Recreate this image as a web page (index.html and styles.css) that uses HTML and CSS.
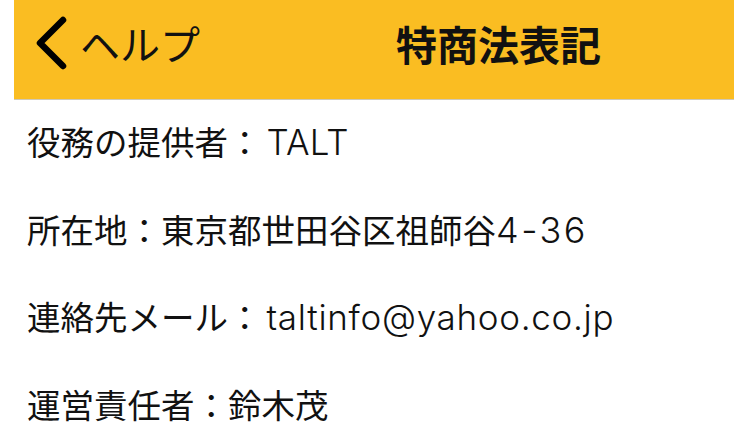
FILE: index.html
```html
<!DOCTYPE html>
<html lang="ja">
<head>
<meta charset="utf-8">
<link rel="stylesheet" href="styles.css">
</head>
<body>
<div class="page">
  <header class="navbar">
    <div class="nav-row">
      <svg class="chev" width="40" height="60" viewBox="0 0 40 60" aria-hidden="true">
        <polyline points="33,7 10,30 33,53" fill="none" stroke="#000" stroke-width="6.5" stroke-linecap="round" stroke-linejoin="round"/>
      </svg>
      <span class="back">ヘルプ</span>
      <span class="title">特商法表記</span>
    </div>
  </header>
  <ul class="info">
    <li>役務の提供者：<span class="lat after-colon">TALT</span></li>
    <li>所在地：東京都世田谷区祖師谷<span class="lat num">4-36</span></li>
    <li>連絡先メール：<span class="lat after-colon mail">taltinfo@yahoo.co.jp</span></li>
    <li>運営責任者：鈴木茂</li>
  </ul>
</div>
</body>
</html>
```
FILE: styles.css
```css
html, body {
  margin: 0;
  padding: 0;
  background: #fff;
}
body {
  font-family: "Noto Sans CJK JP", sans-serif;
  color: #111;
  width: 734px;
  height: 441px;
  overflow: hidden;
}
.page {
  padding-left: 14px;
}
.navbar {
  background: #fabd22;
  height: 99px;
  border-bottom: 1px solid #cfc9b8;
}
.nav-row {
  height: 86px;
  display: flex;
  align-items: center;
}
.chev {
  margin-left: 16px;
  display: block;
}
.back {
  margin-left: 10px;
  font-size: 40px;
  font-weight: 400;
  line-height: 1;
}
.title {
  margin-left: 196px;
  font-size: 41px;
  font-weight: 700;
  line-height: 1;
}
.info {
  list-style: none;
  margin: -2px 0 0 0;
  padding: 0 0 0 13px;
}
.info li {
  font-size: 33.5px;
  line-height: 86.5px;
  white-space: nowrap;
}
.lat {
  font-family: Inter, "Liberation Sans", sans-serif;
  font-size: 35px;
  font-weight: 300;
  letter-spacing: 0.2px;
}
.after-colon {
  margin-left: 5px;
}
.mail {
  letter-spacing: 0.7px;
}
.num {
  font-size: 36px;
  letter-spacing: 2.5px;
}
```
